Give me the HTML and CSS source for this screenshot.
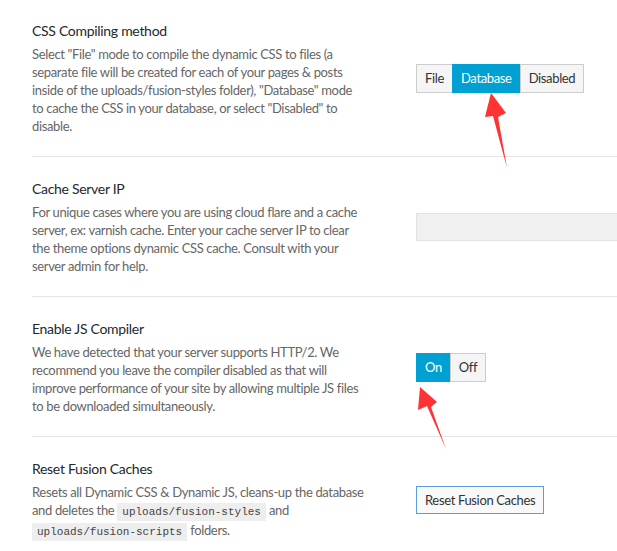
FILE: index.html
```html
<!DOCTYPE html>
<html lang="en">
<head>
    <meta charset="UTF-8">
    <meta name="viewport" content="width=device-width, initial-scale=1.0">
    <title>Performance Options</title>
    <link rel="stylesheet" href="styles.css">
</head>
<body>
    <div class="options">
        <div class="option first">
            <div class="option-info">
                <h3>CSS Compiling method</h3>
                <p>Select "File" mode to compile the dynamic CSS to files (a separate file will be created for each of your pages &amp; posts inside of the uploads/fusion-styles folder), "Database" mode to cache the CSS in your database, or select "Disabled" to disable.</p>
            </div>
            <div class="option-field">
                <div class="button-set">
                    <button type="button">File</button>
                    <button type="button" class="active">Database</button>
                    <button type="button">Disabled</button>
                </div>
            </div>
        </div>

        <div class="option">
            <div class="option-info">
                <h3>Cache Server IP</h3>
                <p>For unique cases where you are using cloud flare and a cache server, ex: varnish cache. Enter your cache server IP to clear the theme options dynamic CSS cache. Consult with your server admin for help.</p>
            </div>
            <div class="option-field">
                <input type="text" class="text-input">
            </div>
        </div>

        <div class="option">
            <div class="option-info">
                <h3>Enable JS Compiler</h3>
                <p>We have detected that your server supports HTTP/2. We recommend you leave the compiler disabled as that will improve performance of your site by allowing multiple JS files to be downloaded simultaneously.</p>
            </div>
            <div class="option-field">
                <div class="button-set">
                    <button type="button" class="active">On</button>
                    <button type="button">Off</button>
                </div>
            </div>
        </div>

        <div class="option last">
            <div class="option-info">
                <h3>Reset Fusion Caches</h3>
                <p>Resets all Dynamic CSS &amp; Dynamic JS, cleans-up the database and deletes the <code>uploads/fusion-styles</code> and <code>uploads/fusion-scripts</code> folders.</p>
            </div>
            <div class="option-field">
                <button type="button" class="reset-button">Reset Fusion Caches</button>
            </div>
        </div>
    </div>

    <!-- annotation arrows -->
    <svg class="arrows" width="617" height="551" viewBox="0 0 617 551">
        <polygon points="491,93 506,113 498,117 507,168 493,116 485,117" fill="#ff3333"/>
        <polygon points="420,387 437,402 431,407 446,449 427,406 418,410" fill="#ff3333"/>
    </svg>
</body>
</html>
```

FILE: styles.css
```css
body {
    font-family: Lato, "Open Sans", sans-serif;
    background-color: #fff;
    margin: 0;
    padding: 0;
    position: relative;
    overflow: hidden;
}

.options {
    padding-left: 32px;
}

.option {
    display: grid;
    grid-template-columns: 384px 1fr;
    align-items: center;
    padding: 22px 0 21px;
    border-bottom: 1px solid #e5e5e5;
}

.option.first {
    padding-top: 21px;
}

.option.last {
    border-bottom: none;
}

.option-info {
    width: 332px;
}

h3 {
    margin: 0 0 4px;
    font-size: 14px;
    line-height: 20px;
    font-weight: normal;
    letter-spacing: -0.3px;
    color: #23282d;
}

p {
    margin: 0;
    font-size: 13px;
    line-height: 18px;
    letter-spacing: -0.35px;
    color: #666;
}

code {
    display: inline-block;
    font-family: "Liberation Mono", monospace;
    font-size: 11px;
    line-height: 18px;
    letter-spacing: 0;
    background-color: #eee;
    color: #444;
    padding: 0 5px;
}

.button-set {
    display: flex;
}

.button-set button {
    font-family: Lato, "Open Sans", sans-serif;
    font-size: 13px;
    letter-spacing: -0.35px;
    height: 29px;
    padding: 0 8px;
    background-color: #f5f5f5;
    color: #333;
    border: 1px solid #ccc;
    margin-left: -1px;
    cursor: pointer;
}

.button-set button:first-child {
    margin-left: 0;
}

.button-set button.active {
    background-color: #00a0d2;
    border-color: #00a0d2;
    color: #fff;
}

.text-input {
    display: block;
    width: 100%;
    height: 28px;
    box-sizing: border-box;
    background-color: #f1f0f0;
    border: 1px solid #e3e3e3;
    border-right: none;
}

.reset-button {
    font-family: Lato, "Open Sans", sans-serif;
    font-size: 13px;
    letter-spacing: -0.35px;
    height: 28px;
    padding: 0 8px;
    background-color: #f9f9f9;
    color: #333;
    border: 1px solid #5b9dd9;
    cursor: pointer;
}

.arrows {
    position: absolute;
    left: 0;
    top: 0;
    pointer-events: none;
}
```
